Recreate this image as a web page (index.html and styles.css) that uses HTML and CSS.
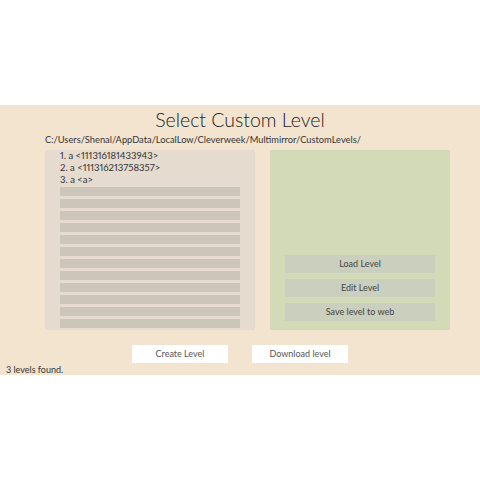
FILE: index.html
```html
<!DOCTYPE html>
<html>
<head>
<meta charset="utf-8">
<link rel="stylesheet" href="styles.css">
</head>
<body>
<div class="screen">
  <div class="stage">
    <h1 class="title">Select Custom Level</h1>
    <div class="path">C:/Users/Shenal/AppData/LocalLow/Cleverweek/Multimirror/CustomLevels/</div>
    <div class="panels">
      <div class="list-panel">
        <div class="entry">1. a &lt;111316181433943&gt;</div>
        <div class="entry">2. a &lt;111316213758357&gt;</div>
        <div class="entry">3. a &lt;a&gt;</div>
        <div class="rows">
          <div class="row"></div><div class="row"></div><div class="row"></div>
          <div class="row"></div><div class="row"></div><div class="row"></div>
          <div class="row"></div><div class="row"></div><div class="row"></div>
          <div class="row"></div><div class="row"></div><div class="row"></div>
        </div>
      </div>
      <div class="action-panel">
        <div class="action">Load Level</div>
        <div class="action">Edit Level</div>
        <div class="action">Save level to web</div>
      </div>
    </div>
    <div class="bottom-buttons">
      <div class="btn">Create Level</div>
      <div class="btn">Download level</div>
    </div>
    <div class="status">3 levels found.</div>
  </div>
</div>
</body>
</html>
```
FILE: styles.css
```css
html, body {
  margin: 0;
  padding: 0;
  background: #ffffff;
}
.screen {
  width: 480px;
  height: 480px;
  padding-top: 105px;
  box-sizing: border-box;
}
.stage {
  height: 270px;
  background: #f3e4d0;
  overflow: hidden;
  display: flex;
  flex-direction: column;
  padding-top: 3px;
  box-sizing: border-box;
  font-family: "Lato", "Noto Sans", sans-serif;
  font-variant-numeric: proportional-nums;
  color: #333;
}
.title {
  margin: 0;
  font-size: 19.5px;
  line-height: 24px;
  font-weight: 300;
  text-align: center;
  color: #222;
}
.path {
  margin-top: 2px;
  margin-left: 45px;
  font-size: 9.3px;
  line-height: 12px;
  color: #333;
  white-space: nowrap;
}
.panels {
  margin-top: 4px;
  margin-left: 45px;
  display: flex;
  gap: 15px;
  height: 180px;
}
.list-panel {
  width: 210px;
  height: 180px;
  background: #e5dccf;
  padding-left: 15px;
  box-sizing: border-box;
  overflow: hidden;
}
.entry {
  font-size: 9.5px;
  line-height: 12px;
  color: #333;
  white-space: nowrap;
}
.rows {
  margin-top: 1px;
  display: flex;
  flex-direction: column;
  gap: 3px;
}
.row {
  width: 180px;
  height: 9px;
  background: #ccc6ba;
}
.action-panel {
  width: 180px;
  height: 180px;
  background: #d3dab8;
  display: flex;
  flex-direction: column;
  justify-content: flex-end;
  align-items: center;
  gap: 6px;
  padding-bottom: 9px;
  box-sizing: border-box;
}
.action {
  width: 150px;
  height: 18px;
  background: #cbcfbd;
  font-size: 9px;
  line-height: 18px;
  text-align: center;
  color: #444;
}
.bottom-buttons {
  margin-top: 15px;
  display: flex;
  justify-content: center;
  gap: 24px;
}
.btn {
  width: 96px;
  height: 18px;
  background: #ffffff;
  font-size: 9px;
  line-height: 18px;
  text-align: center;
  color: #555;
}
.status {
  margin-top: 1px;
  margin-left: 6px;
  font-size: 9px;
  line-height: 12px;
  color: #333;
}
```
